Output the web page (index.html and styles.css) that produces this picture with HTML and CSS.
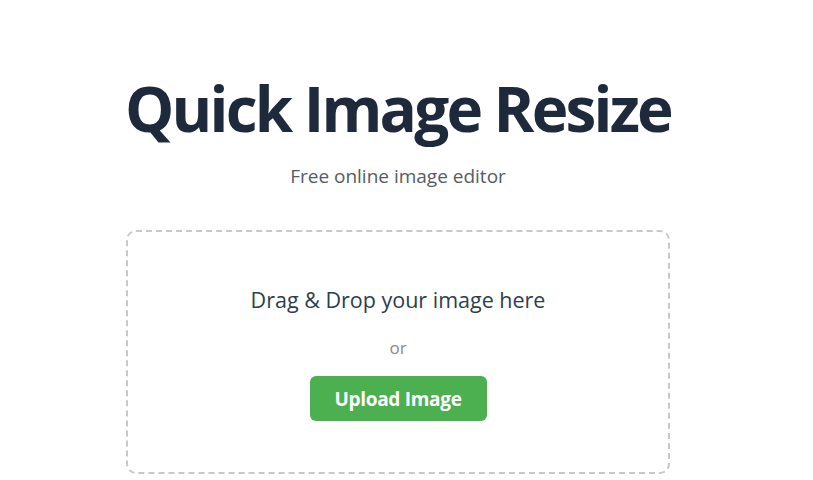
FILE: index.html
```html
<!DOCTYPE html>
<html lang="en">
<head>
<meta charset="utf-8">
<title>Quick Image Resize</title>
<link rel="stylesheet" href="styles.css">
</head>
<body>
<div class="page">
  <main class="app">
    <header class="hero">
      <h1 class="title">Quick Image Resize</h1>
      <p class="subtitle">Free online image editor</p>
    </header>
    <section class="dropzone">
      <p class="drop-text">Drag &amp; Drop your image here</p>
      <p class="or">or</p>
      <button class="upload-btn" type="button">Upload Image</button>
    </section>
  </main>
</div>
</body>
</html>
```
FILE: styles.css
```css
* { box-sizing: border-box; }

html, body {
  margin: 0;
  padding: 0;
  background: #ffffff;
}

body {
  font-family: "Open Sans", "Noto Sans", "Liberation Sans", sans-serif;
  color: #1e293b;
}

.page {
  width: 796px;
  display: flex;
  justify-content: center;
}

.app {
  width: 544px;
  padding-top: 64px;
  display: flex;
  flex-direction: column;
  align-items: center;
}

.hero {
  text-align: center;
}

.title {
  margin: 0;
  font-size: 62px;
  line-height: 88px;
  font-weight: 700;
  letter-spacing: -2.8px;
  color: #1e293b;
  white-space: nowrap;
}

.subtitle {
  margin: 0;
  padding-top: 11px;
  font-size: 19px;
  line-height: 26px;
  color: #555c66;
}

.dropzone {
  margin-top: 41px;
  width: 544px;
  height: 244px;
  border: 2px dashed #c8c8c8;
  border-radius: 10px;
  display: flex;
  flex-direction: column;
  align-items: center;
  padding-top: 53px;
}

.drop-text {
  margin: 0;
  font-size: 21.5px;
  line-height: 30px;
  color: #2c3e50;
}

.or {
  margin: 21px 0 0;
  font-size: 17px;
  line-height: 24px;
  color: #8a8a8a;
}

.upload-btn {
  margin-top: 16px;
  width: 177px;
  height: 45px;
  border: none;
  border-radius: 6px;
  background: #4caf50;
  color: #ffffff;
  font-family: inherit;
  font-size: 19px;
  font-weight: 700;
  letter-spacing: -0.3px;
  cursor: pointer;
}
```
